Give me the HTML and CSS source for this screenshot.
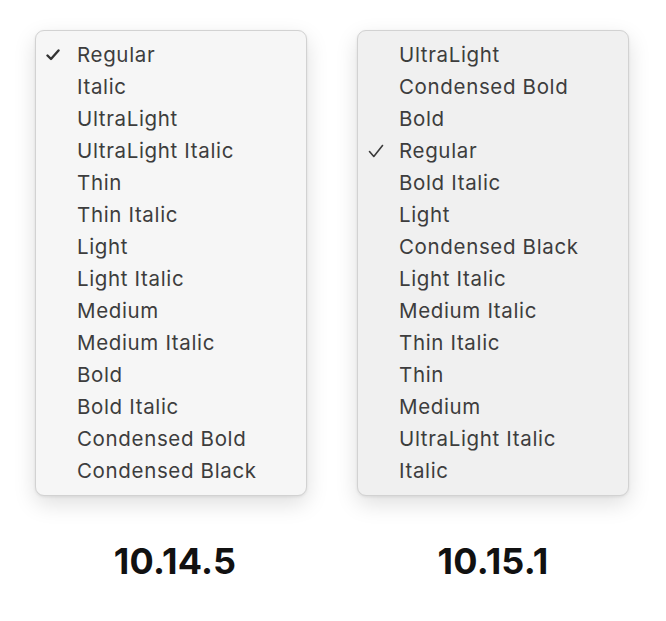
FILE: index.html
```html
<!DOCTYPE html>
<html>
<head>
<meta charset="utf-8">
<link rel="stylesheet" href="styles.css">
</head>
<body>
<div class="page">
  <div class="col">
    <ul class="menu menu-old">
      <li class="item checked"><span class="check"><svg width="14" height="12" viewBox="0 0 14 12"><path d="M1.5 6.5 L5 10 L12.5 1.5" fill="none" stroke="#333" stroke-width="2.4" stroke-linecap="round" stroke-linejoin="round"/></svg></span>Regular</li>
      <li class="item">Italic</li>
      <li class="item">UltraLight</li>
      <li class="item">UltraLight Italic</li>
      <li class="item">Thin</li>
      <li class="item">Thin Italic</li>
      <li class="item">Light</li>
      <li class="item">Light Italic</li>
      <li class="item">Medium</li>
      <li class="item">Medium Italic</li>
      <li class="item">Bold</li>
      <li class="item">Bold Italic</li>
      <li class="item">Condensed Bold</li>
      <li class="item">Condensed Black</li>
    </ul>
    <div class="label">10.14.5</div>
  </div>
  <div class="col">
    <ul class="menu menu-new">
      <li class="item">UltraLight</li>
      <li class="item">Condensed Bold</li>
      <li class="item">Bold</li>
      <li class="item checked"><span class="check"><svg width="16" height="14" viewBox="0 0 16 14"><path d="M1.5 7.5 L5.8 12.5 L14.5 1.5" fill="none" stroke="#3a3a3a" stroke-width="1.6" stroke-linecap="round" stroke-linejoin="round"/></svg></span>Regular</li>
      <li class="item">Bold Italic</li>
      <li class="item">Light</li>
      <li class="item">Condensed Black</li>
      <li class="item">Light Italic</li>
      <li class="item">Medium Italic</li>
      <li class="item">Thin Italic</li>
      <li class="item">Thin</li>
      <li class="item">Medium</li>
      <li class="item">UltraLight Italic</li>
      <li class="item">Italic</li>
    </ul>
    <div class="label">10.15.1</div>
  </div>
</div>
</body>
</html>
```

FILE: styles.css
```css
html, body {
  margin: 0;
  padding: 0;
  background: #ffffff;
}
body {
  font-family: Inter, "Open Sans", "Liberation Sans", sans-serif;
}
.page {
  display: flex;
  padding: 30px 0 0 35px;
  gap: 50px;
}
.col {
  display: flex;
  flex-direction: column;
  align-items: center;
  width: 272px;
}
.menu {
  list-style: none;
  margin: 0;
  padding: 8px 0;
  width: 272px;
  box-sizing: border-box;
  border-radius: 9px;
  border: 1px solid #d2d2d2;
  box-shadow: 0 8px 22px rgba(0, 0, 0, 0.13), 0 1px 3px rgba(0, 0, 0, 0.08);
}
.menu-old {
  background: #f6f6f6;
}
.menu-new {
  background: #f0f0f0;
}
.item {
  position: relative;
  height: 32px;
  line-height: 32px;
  padding-left: 41px;
  font-size: 20.5px;
  color: #3d3d3d;
  letter-spacing: 0.65px;
  white-space: nowrap;
}
.check {
  position: absolute;
  left: 10px;
  top: 0;
  height: 32px;
  display: flex;
  align-items: center;
}
.label {
  margin-top: 43px;
  padding-left: 8px;
  font-size: 36px;
  font-weight: 700;
  color: #111111;
  letter-spacing: 0.2px;
}
.menu-new + .label {
  padding-left: 0;
}
```
